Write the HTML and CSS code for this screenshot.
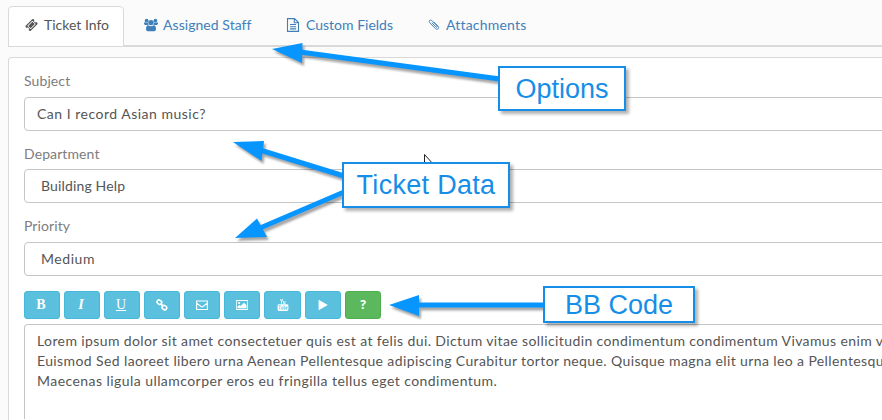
FILE: index.html
```html
<!DOCTYPE html>
<html lang="en">
<head>
<meta charset="utf-8">
<title>Ticket</title>
<link rel="stylesheet" href="styles.css">
</head>
<body>
<nav class="tabs">
  <a class="tab active"><svg class="icon" viewBox="0 0 1792 1792"><path d="M1024 452l316 316-572 572-316-316zm-211 979l618-618q19-19 19-45t-19-45l-362-362q-18-18-45-18t-45 18l-618 618q-19 19-19 45t19 45l362 362q18 18 45 18t45-18zm889-637l-907 908q-37 37-90.500 37t-90.500-37l-126-126q56-56 56-136t-56-136-136-56-136 56l-125-126q-37-37-37-90.500t37-90.500l907-906q37-37 90.500-37t90.500 37l125 125q-56 56-56 136t56 136 136 56 136-56l126 125q37 37 37 90.500t-37 90.500z"/></svg><span class="t-info">Ticket Info</span></a>
  <a class="tab staff"><svg class="icon" viewBox="0 0 14 14"><circle cx="2.600" cy="2.700" r="1.900"/><circle cx="11.400" cy="2.700" r="1.900"/><path d="M0 5.600Q0 4 1 4.200Q2.400 5.200 3.900 4.500Q3.800 6 4.800 7H1.300Q0 7 0 5.600zM14 5.600Q14 4 13 4.200Q11.600 5.200 10.100 4.500Q10.200 6 9.200 7h3.500Q14 7 14 5.600z"/><circle cx="7" cy="4.600" r="2.700"/><path d="M2 11Q2 7.300 4.400 7.300Q7 9.400 9.600 7.300Q12 7.300 12 11Q12 13.300 10.200 13.300H3.800Q2 13.300 2 11z"/></svg><span class="t-staff">Assigned Staff</span></a>
  <a class="tab fields"><svg class="icon" viewBox="0 0 14 14"><path class="line" d="M1.500.6h7l4 4v8.800h-11zM8.300.8v4h4M4 6.500h6M4 8.700h6M4 10.900h6"/></svg><span class="t-fields">Custom Fields</span></a>
  <a class="tab files"><svg class="icon" viewBox="0 0 14 14"><path class="line" d="M4.300 4.800l4.800 4.900c1.200 1.200 2.400-.1 1.400-1.200L4.700 2.700C2.500.6.200 3 2.200 5.200l6.300 6.400c2.600 2.500 5.300-.4 3-2.800L6.700 4"/></svg><span class="t-files">Attachments</span></a>
</nav>

<main class="panel">
  <label class="l-subject"><span>Subject</span></label>
  <div class="field"><span class="v-subject">Can I record Asian music?</span></div>
  <label class="l-dept"><span>Department</span></label>
  <div class="field select"><span class="v-dept">Building Help</span></div>
  <label class="l-prio"><span>Priority</span></label>
  <div class="field select"><span class="v-prio">Medium</span></div>

  <div class="toolbar">
    <button class="btn serif bold">B</button>
    <button class="btn serif italic">I</button>
    <button class="btn serif underline">U</button>
    <button class="btn"><svg viewBox="0 0 12 12"><g class="link"><rect x="1" y="1.300" width="4.800" height="3.800" rx="1.800" transform="rotate(35 3.400 3.200)"/><rect x="6" y="6.700" width="4.800" height="3.800" rx="1.800" transform="rotate(35 8.400 8.600)"/><path d="M4.600 4.500l2.700 2.900"/></g></svg></button>
    <button class="btn"><svg viewBox="0 0 12 12"><path class="line" d="M.6 2h10.800v8.500H.6zM.8 4.200L5 7.500q1 .7 2 0l4.200-3.300"/></svg></button>
    <button class="btn"><svg viewBox="0 0 12 12"><path class="line" d="M.2 1.500h11.600v9H.2z"/><circle cx="3" cy="4" r="1.100"/><path d="M1.500 9.300V7.500L3.500 6l1.200 1L8 3.800l2.500 2.500v3z"/></svg></button>
    <button class="btn wide"><svg viewBox="0 0 12 12"><path d="M3 0h1l.6 1.800L5.200 0h.9L5 2.700v2H4.200v-2zM6.200 1.900h.8v2q.3.200.6-.2V1.900h.8v2.800H6.200zM2 5.200h8q1.400 0 1.400 1.400v3.700q0 1.600-1.400 1.600H2Q.6 11.900.6 10.300V6.600Q.6 5.200 2 5.200z"/><path class="cut" d="M1.600 6.600h2.200M2.700 6.600v4M4.600 7.700v2.600h1.200V7.700M7 6.300v4h1V8H7M9 9.100h1.300V8H9v2.400h1.300"/></svg></button>
    <button class="btn"><svg viewBox="0 0 12 12"><path d="M1.600.8L10.800 6 1.600 11.200z"/></svg></button>
    <button class="btn help">?</button>
  </div>

  <div class="editor">
    <div><span class="line1">Lorem ipsum dolor sit amet consectetuer quis est at felis dui. Dictum vitae sollicitudin condimentum condimentum Vivamus enim v</span></div>
    <div><span class="line2">Euismod Sed laoreet libero urna Aenean Pellentesque adipiscing Curabitur tortor neque. Quisque magna elit urna leo a Pellentesqu</span></div>
    <div><span class="line3">Maecenas ligula ullamcorper eros eu fringilla tellus eget condimentum.</span></div>
  </div>
</main>

<svg class="arrows" viewBox="0 0 882 420">
  <g class="shafts"><path d="M300 52L500 79"/><path d="M260 150L344 176"/><path d="M260 228L344 192"/><path d="M415 305H545"/></g>
  <path d="M272 49L302.500 43L302 63zM233 142L264 141L261.500 161zM235 238L257 218.500L267 237zM389 305L419 295V316z"/>
</svg>
<svg class="cursor" viewBox="0 0 12 18"><path d="M.5.500v15l4-4h6z"/></svg>
<div class="callout options"><span>Options</span></div>
<div class="callout data"><span>Ticket Data</span></div>
<div class="callout code"><span>BB Code</span></div>
</body>
</html>
```
FILE: styles.css
```css
* { box-sizing: border-box; }
body {
  margin: 0;
  height: 420px;
  position: relative;
  overflow: hidden;
  padding: 6px 0 0 8px;
  background: #fbfbfb;
  color: #555;
  font: 14px/20px Lato, "Open Sans", sans-serif;
}
.tabs {
  display: flex;
  height: 41px;
  border-bottom: 2px solid #d9d9d9;
}
.tab {
  display: flex;
  height: 39px;
  color: #3f80ba;
  white-space: nowrap;
}
.tab.active {
  width: 116px;
  height: 41px;
  padding-left: 16px;
  color: #555;
  background: #fff;
  border: 1px solid #d9d9d9;
  border-radius: 4px 4px 0 0;
}
.tab .icon { width: 14px; height: 14px; margin-top: 12px; flex: none; }
.tab.active .icon { width: 13px; margin: 11px 0 0 0; }
.tab span { padding: 9px 0 0 6px; }
.tab.active span { padding-top: 8px; padding-left: 6px; }
.staff { width: 142px; padding-left: 20px; }
.staff span { padding-left: 5px; letter-spacing: .05px; }
.fields { width: 141px; padding-left: 20px; }
.files { padding-left: 21px; }
.files span { letter-spacing: .2px; }
.files .icon { width: 12px; height: 13px; }
.icon, .btn svg { fill: currentColor; }
.line { fill: none; stroke: currentColor; stroke-width: 1.1; }
.panel {
  height: 363px;
  margin: 10px -10px 0 0;
  padding: 14px 0 0 15px;
  background: #fff;
  border: 1px solid #d9d9d9;
  border-bottom: 0;
  border-radius: 4px 4px 0 0;
}
label { display: block; height: 25px; color: #7d7d7d; letter-spacing: .1px; }
label span { position: relative; top: -1px; }
.field {
  height: 34px;
  padding: 6px 12px;
  border: 1px solid #c5c5c5;
  border-radius: 4px;
  margin-bottom: 14px;
}
.l-dept { height: 24px; }
.l-prio { height: 25px; }
.select { padding-left: 16px; }
.v-subject { letter-spacing: .5px; }
.v-dept { letter-spacing: .15px; }
.v-prio { letter-spacing: .55px; }
.toolbar { display: flex; gap: 4px; height: 28px; margin-top: 15px; }
.btn {
  display: flex;
  width: 36px;
  height: 28px;
  padding: 0;
  align-items: center;
  justify-content: center;
  border: 1px solid #46b8da;
  border-radius: 3px;
  background: #5bc0de;
  color: #fff;
  font: bold 12px/18px "Open Sans", sans-serif;
}
.btn.wide { width: 37px; }
.btn svg { width: 12px; height: 12px; }
.btn.serif { font-family: "Liberation Serif", serif; font-size: 14px; padding-right: 2px; }
.btn.italic { font-style: italic; }
.btn.underline { font-weight: normal; text-decoration: underline; }
.btn.help { background: #5cb85c; border-color: #4cae4c; }
.link { fill: none; stroke: currentColor; stroke-width: 1.6; }
.cut { fill: none; stroke: #5bc0de; stroke-width: .6; }
.editor {
  height: 95px;
  margin-top: 5px;
  padding: 6px 12px 0;
  border: 1px solid #c5c5c5;
  border-bottom: 0;
  border-radius: 4px 4px 0 0;
  white-space: nowrap;
}
.line1, .line2 { letter-spacing: .39px; }
.line3 { letter-spacing: .44px; }
.arrows { position: absolute; inset: 0; width: 882px; height: 420px; fill: #0795ff; filter: drop-shadow(2px 3px 1px rgba(0,0,0,.35)); }
.shafts { stroke: #0795ff; stroke-width: 5; }
.cursor { position: absolute; left: 424px; top: 154px; width: 12px; height: 18px; fill: #fff; stroke: #222; }
.callout {
  position: absolute;
  display: flex;
  align-items: center;
  justify-content: center;
  border: 2px solid #168ee8;
  background: #fff;
  color: #168ee8;
  font: 27px/30px "Liberation Sans", Arial, sans-serif;
  box-shadow: 3px 3px 3px rgba(0,0,0,.3);
  white-space: nowrap;
}
.options { left: 498px; top: 66px; width: 128px; height: 45px; }
.data { left: 342px; top: 162px; width: 168px; height: 46px; letter-spacing: .3px; }
.code { left: 543px; top: 286px; width: 152px; height: 37px; }
```
